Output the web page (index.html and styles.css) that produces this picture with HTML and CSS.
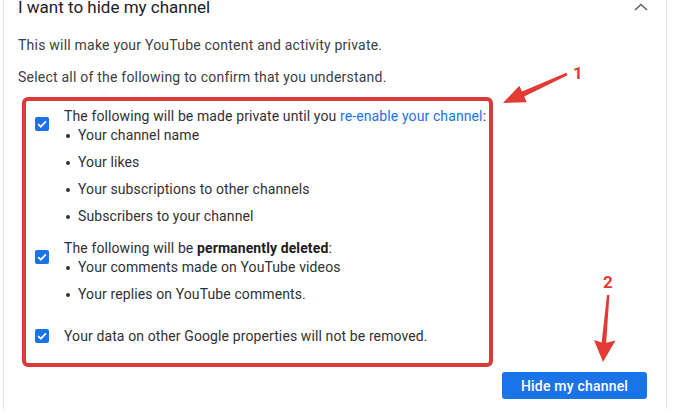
FILE: index.html
```html
<!DOCTYPE html>
<html lang="en">
<head>
<meta charset="utf-8">
<title>Hide my channel</title>
<link rel="stylesheet" href="styles.css">
</head>
<body>
<div class="card">
  <div class="header">
    <span class="title">I want to hide my channel</span>
    <svg class="chevron" width="14" height="8" viewBox="0 0 14 8"><path d="M1 7 L7 1.5 L13 7" fill="none" stroke="#5f6368" stroke-width="1.6"/></svg>
  </div>
  <p class="intro">This will make your YouTube content and activity private.</p>
  <p class="intro second">Select all of the following to confirm that you understand.</p>
  <div class="confirm-box">
    <div class="item item-one">
      <span class="check c-list"><svg width="14" height="14" viewBox="0 0 14 14"><path d="M3.2 7.2 L5.8 9.7 L10.9 4.4" fill="none" stroke="#fff" stroke-width="1.7"/></svg></span>
      <div class="item-text">
        <div class="line">The following will be made private until you <span class="link">re-enable your channel</span>:</div>
        <ul class="bullets">
          <li>Your channel name</li>
          <li>Your likes</li>
          <li>Your subscriptions to other channels</li>
          <li>Subscribers to your channel</li>
        </ul>
      </div>
    </div>
    <div class="item item-two">
      <span class="check c-list2"><svg width="14" height="14" viewBox="0 0 14 14"><path d="M3.2 7.2 L5.8 9.7 L10.9 4.4" fill="none" stroke="#fff" stroke-width="1.7"/></svg></span>
      <div class="item-text">
        <div class="line">The following will be <b>permanently deleted</b>:</div>
        <ul class="bullets">
          <li>Your comments made on YouTube videos</li>
          <li>Your replies on YouTube comments.</li>
        </ul>
      </div>
    </div>
    <div class="item item-three">
      <span class="check c-single"><svg width="14" height="14" viewBox="0 0 14 14"><path d="M3.2 7.2 L5.8 9.7 L10.9 4.4" fill="none" stroke="#fff" stroke-width="1.7"/></svg></span>
      <div class="item-text">
        <div class="line">Your data on other Google properties will not be removed.</div>
      </div>
    </div>
  </div>
  <div class="actions">
    <button class="hide-btn">Hide my channel</button>
  </div>
</div>
<svg class="annotations" width="673" height="412" viewBox="0 0 673 412">
  <polygon fill="#e23b36" points="503,103 519.3,85.8 522,91.5 566.4,72.8 567.6,75.2 524.2,96.5 526.7,102.2"/>
  <text x="578" y="79" class="anno-num" text-anchor="middle">1</text>
  <polygon fill="#e23b36" points="603,362 594,340 601.6,342.5 607,295 609.4,295 606.2,342.8 615.5,340.5"/>
  <text x="608" y="288" class="anno-num" text-anchor="middle">2</text>
</svg>
</body>
</html>
```

FILE: styles.css
```css
html, body {
  margin: 0;
  padding: 0;
  background: #ffffff;
}

body {
  font-family: Roboto, "Liberation Sans", Arial, sans-serif;
  color: #303134;
  width: 673px;
  height: 412px;
  overflow: hidden;
  position: relative;
}

.card {
  margin: 0 6px 0 3px;
  border-left: 1px solid #e4e4e4;
  border-right: 1px solid #e4e4e4;
  height: 412px;
  box-sizing: border-box;
  padding: 0 18px 0 14px;
}

.header {
  display: flex;
  justify-content: space-between;
  align-items: center;
  height: 20px;
  margin-top: -3px;
}

.title {
  font-size: 17px;
  line-height: 20px;
  color: #202124;
}

.chevron {
  display: block;
  margin-top: -1px;
}

.intro {
  margin: 18px 0 0 0;
  font-size: 14px;
  line-height: 20px;
  letter-spacing: 0.22px;
  color: #3c4043;
}

.intro.second {
  margin-top: 12px;
}

.confirm-box {
  margin: 10px 0 0 4px;
  width: 471px;
  box-sizing: border-box;
  border: 4px solid #dc3a37;
  border-radius: 6px;
  padding: 5px 0 17px 9px;
  display: flex;
  flex-direction: column;
}

.item {
  display: flex;
  gap: 15px;
  font-size: 14px;
  line-height: 20px;
  letter-spacing: 0.11px;
  color: #303134;
}

.item-two {
  margin-top: 12px;
}

.item-three {
  margin-top: 22px;
}

.check {
  flex: none;
  width: 14px;
  height: 14px;
  border-radius: 2px;
  background: #1a73e8;
  display: block;
}

.check svg {
  display: block;
}

.c-list { margin-top: 11px; }
.c-list2 { margin-top: 12px; }
.c-single { margin-top: 3px; }

.line {
  white-space: nowrap;
}

.line b {
  font-weight: 700;
  color: #202124;
}

.link {
  color: #1a73e8;
}

.bullets {
  list-style: none;
  margin: -1px 0 0 0;
  padding: 0;
}

.bullets li {
  display: flex;
  align-items: center;
  white-space: nowrap;
}

.bullets li + li {
  margin-top: 7px;
}

.bullets li::before {
  content: "";
  width: 4px;
  height: 4px;
  border-radius: 50%;
  background: #303134;
  margin: 1px 8px 0 2px;
  flex: none;
}

.actions {
  display: flex;
  justify-content: flex-end;
  margin-top: 5px;
  padding-right: 1px;
}

.hide-btn {
  width: 145px;
  height: 27px;
  border: none;
  border-radius: 3px;
  background: #1a73e8;
  color: #ffffff;
  font-family: Roboto, "Liberation Sans", Arial, sans-serif;
  font-size: 14px;
  font-weight: 500;
  padding: 0;
  letter-spacing: 0.2px;
}

.annotations {
  position: absolute;
  left: 0;
  top: 0;
  pointer-events: none;
}

.anno-num {
  font-family: Roboto, "Liberation Sans", Arial, sans-serif;
  font-weight: 700;
  font-size: 17px;
  fill: #e23b36;
}
```
